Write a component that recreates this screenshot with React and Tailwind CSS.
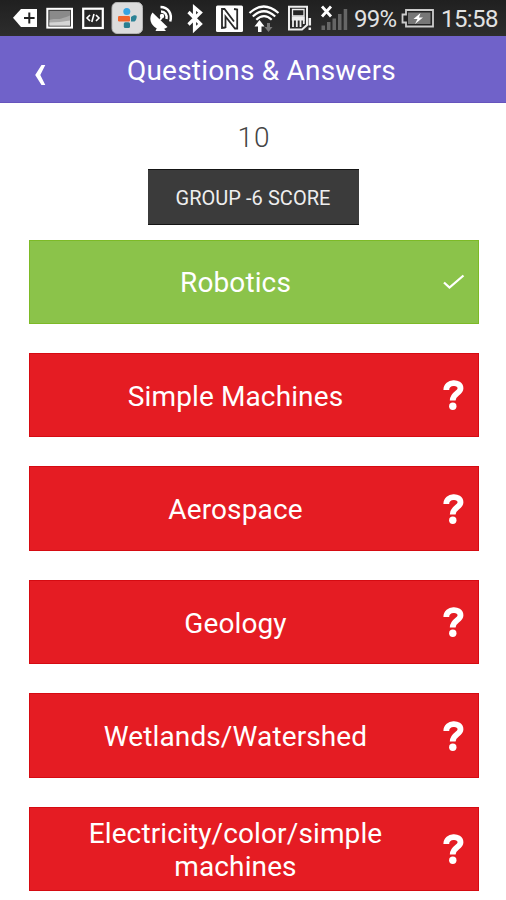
import React from 'react';

const categories = [
  { name: 'Robotics', done: true },
  { name: 'Simple Machines' },
  { name: 'Aerospace' },
  { name: 'Geology' },
  { name: 'Wetlands/Watershed' },
  { name: 'Electricity/color/simple machines' },
];

const KeyboardIcon = () => (
  <svg className="ml-3 h-9 w-[26px]" viewBox="0 0 26 36">
    <path d="M1 17.800 9 9h16v18H9z" fill="#fff" />
    <path d="M17.300 12.500v11M12 18h10.600" stroke="#222" strokeWidth="2" />
  </svg>
);

const PictureIcon = () => (
  <svg className="ml-2 h-9 w-[28px]" viewBox="0 0 28 36">
    <rect x="1.300" y="8.800" width="24.700" height="18.800" fill="#444" stroke="#fff" strokeWidth="2" />
    <rect x="3.500" y="11" width="20.500" height="14.500" fill="#8a8a8a" />
    <path d="M3.500 20c5-2 8 0 12-1.500 3-1.500 5-1 8.500-3v10H3.500z" fill="#a8a8a8" />
    <path d="M3.500 22.500c7 0 14-1 20.500-2v5H3.500z" fill="#d5d5d5" />
  </svg>
);

const CodeIcon = () => (
  <svg className="ml-[7px] h-9 w-[24px]" viewBox="0 0 24 36" fill="none" stroke="#fff">
    <rect x="2.200" y="8.700" width="19.600" height="19.300" strokeWidth="2.200" />
    <path d="m9 15-3 3 3 3M15 15l3 3-3 3M13 14l-2.200 8" strokeWidth="1.600" />
  </svg>
);

const RadioIcon = () => (
  <svg className="ml-[6px] h-9 w-[32px]" viewBox="0 0 32 36">
    <rect x="1" y="2.500" width="30.500" height="31" rx="5" fill="#dcdcdc" stroke="#b5b5b5" />
    <circle cx="15.800" cy="11.500" r="3.500" fill="#36a3e0" />
    <rect x="7" y="16" width="12" height="5.500" rx="1.200" fill="#f0642b" />
    <rect x="12.800" y="22.300" width="6.200" height="5.700" rx="1.500" fill="#287f91" />
    <path d="M20 17c2-2 5-2 5.500-1.200.7 1.300-.5 5-2 5.700H20z" fill="#2b8295" />
  </svg>
);

const SatelliteIcon = () => (
  <svg className="ml-[5px] h-9 w-[28px]" viewBox="0 0 28 36" fill="none" stroke="#fff">
    <path d="M4.500 12.500C1 17 2 23 6 26.500s9.500 3.500 13.500.5z" fill="#fff" stroke="none" />
    <path d="m12 20 3-4" strokeWidth="2" />
    <path d="M9 27.500h6l3 3.500H7.500z" fill="#fff" stroke="none" />
    <circle cx="14" cy="16" r="2.200" fill="#fff" stroke="none" />
    <path d="M13 11.500c4 0 6.500 3.500 5.500 7.500M12.500 7c7.500 0 12 6.500 9.700 14.500" strokeWidth="2.500" />
  </svg>
);

const BluetoothIcon = () => (
  <svg className="ml-[10px] h-9 w-[18px]" viewBox="0 0 18 36">
    <path d="m2.500 12 12 12-6 5.500V7.500l6 5L2.500 24.500" fill="none" stroke="#fff" strokeWidth="3.200" />
  </svg>
);

const NfcIcon = () => (
  <svg className="ml-[11px] h-9 w-[29px]" viewBox="0 0 29 36">
    <rect x="1" y="5.500" width="27" height="26.500" rx="1.500" fill="#fff" />
    <path d="M10.500 27.500 7 28V9h2.500l9.500 12.500" fill="none" stroke="#292929" strokeWidth="1.800" />
    <path d="M10.500 28V16.500l9.500 12h2.200V9.500L19 9" fill="none" stroke="#292929" strokeWidth="1.800" />
  </svg>
);

const WifiIcon = () => (
  <svg className="ml-[4px] h-9 w-[32px]" viewBox="0 0 32 36" fill="none" stroke="#fff" strokeWidth="2.200">
    <path d="M1.500 13q14-13 29 0M4.800 16.500q11-10.500 22.400 0M8.300 19.800q7.700-7.500 15.400 0" />
    <path d="m11.500 20-5 6.500H10V32h3.500v-5.500h3z" fill="#fff" stroke="none" />
    <path d="m20.500 32 4-5h-2.500v-4h-3v4h-2.500z" fill="#777" stroke="none" />
  </svg>
);

const SimIcon = () => (
  <svg className="ml-[7px] h-9 w-[26px]" viewBox="0 0 26 36" fill="none" stroke="#eee" strokeWidth="2">
    <path d="M2 6.800h18V25l-5 4.500H2z" />
    <path d="M5.500 9.500h11.500v6.500H5.500z" strokeWidth="1.300" />
    <path d="M4.800 16.500h13v4h-13z" fill="#eee" stroke="none" />
    <path d="M6 20v7M9.800 20v7M13.500 20v7M16.800 20v4" strokeWidth="1.800" />
    <path d="M22.800 18v7.500M22.800 27.500V30" strokeWidth="2.500" />
  </svg>
);

const SignalIcon = () => (
  <svg className="ml-[6px] h-9 w-[30px]" viewBox="0 0 30 36">
    <path d="m3 6.500 9 10M12 6.500l-9 10" stroke="#fff" strokeWidth="2.800" />
    <g fill="#666">
      <rect x="2.500" y="25.500" width="3.500" height="4.500" />
      <rect x="8" y="22" width="3.500" height="8" />
      <rect x="13.500" y="18.500" width="3.500" height="11.500" />
      <rect x="19" y="14" width="3.500" height="16" />
      <rect x="24.700" y="9" width="3.500" height="21" />
    </g>
  </svg>
);

const BatteryIcon = () => (
  <svg className="ml-[4px] h-9 w-[34px]" viewBox="0 0 34 36">
    <path d="M5 10h27v16.500H5v-4H1.500v-8H5z" fill="#222" stroke="#ccc" strokeWidth="1.800" />
    <rect x="7" y="12.500" width="22.500" height="11.500" fill="#777" />
    <path d="m19.500 13-7 6h4L14 24l8-6.500h-4z" fill="#fff" />
  </svg>
);

const StatusBar = () => (
  <div className="flex h-9 items-center bg-linear-to-b from-[#202020] to-[#2d2d2d] text-[24px] leading-9 text-[#e2e2e2]">
    <KeyboardIcon />
    <PictureIcon />
    <CodeIcon />
    <RadioIcon />
    <SatelliteIcon />
    <BluetoothIcon />
    <NfcIcon />
    <WifiIcon />
    <SimIcon />
    <SignalIcon />
    <span className="ml-[5px] w-[43px] whitespace-nowrap pt-[2px] tracking-[-0.800px]">99%</span>
    <BatteryIcon />
    <span className="ml-[6px] whitespace-nowrap pt-[2px] tracking-[-0.600px]">15:58</span>
  </div>
);

const CategoryButton = ({ name, done }) => (
  <button
    className={`flex h-[84.300px] w-full items-center border text-white ${
      done ? 'border-[#7dba27] bg-[#8bc34a]' : 'border-[#d50b12] bg-[#e51c23]'
    }`}
  >
    <span className="ml-[42px] w-[328px] pt-[2px] text-center text-[28px] leading-[33px] tracking-[0.120px]">{name}</span>
    {done ? (
      <svg className="ml-[43px] h-[16px] w-[22px]" viewBox="0 0 22 16">
        <path d="m1 8.500 5.500 5L20.500 1.500" fill="none" stroke="#fff" strokeWidth="2.300" />
      </svg>
    ) : (
      <svg className="ml-[43px] h-[32px] w-[22px]" viewBox="0 0 22 32">
        <path d="M3.300 11C3.300 2.300 17.500 2 17.500 9.300c0 5.200-7.800 5-7.800 12.200" fill="none" stroke="#fff" strokeWidth="5.800" />
        <circle cx="9.800" cy="27.300" r="3.700" fill="#fff" />
      </svg>
    )}
  </button>
);

const App = () => {
  return (
    <div className="h-[900px] w-[506px] overflow-hidden bg-white font-['Roboto',sans-serif]">
      <StatusBar />
      <header className="flex h-[67px] items-center border-b border-[#6654bd] bg-[#7062c9] text-white">
        <svg className="ml-[34px] mt-[11px] h-[22px] w-[12px]" viewBox="0 0 12 22">
          <path d="M7.500 1h3.800L6.300 11l5 10H7.500L1.200 11z" fill="#fff" />
        </svg>
        <h1 className="ml-[81px] whitespace-nowrap pt-[3px] text-[28px] leading-[34px] tracking-[0.200px]">Questions &amp; Answers</h1>
      </header>
      <main className="flex flex-col items-center">
        <div className="mt-[18px] ml-[2px] text-[28px] leading-[34px] font-light tracking-[1px] text-[#444]">10</div>
        <button className="mt-[14px] h-[56px] w-[211px] border-y border-[#151515] bg-[#3b3b3b] pt-[2px] text-[20px] tracking-[0.050px] text-[#eee]">
          GROUP -6 SCORE
        </button>
        <div className="mt-[14.500px] ml-px flex w-[450px] flex-col gap-[29.200px]">
          {categories.map((category) => (
            <CategoryButton key={category.name} {...category} />
          ))}
        </div>
      </main>
    </div>
  );
};

export default App;
